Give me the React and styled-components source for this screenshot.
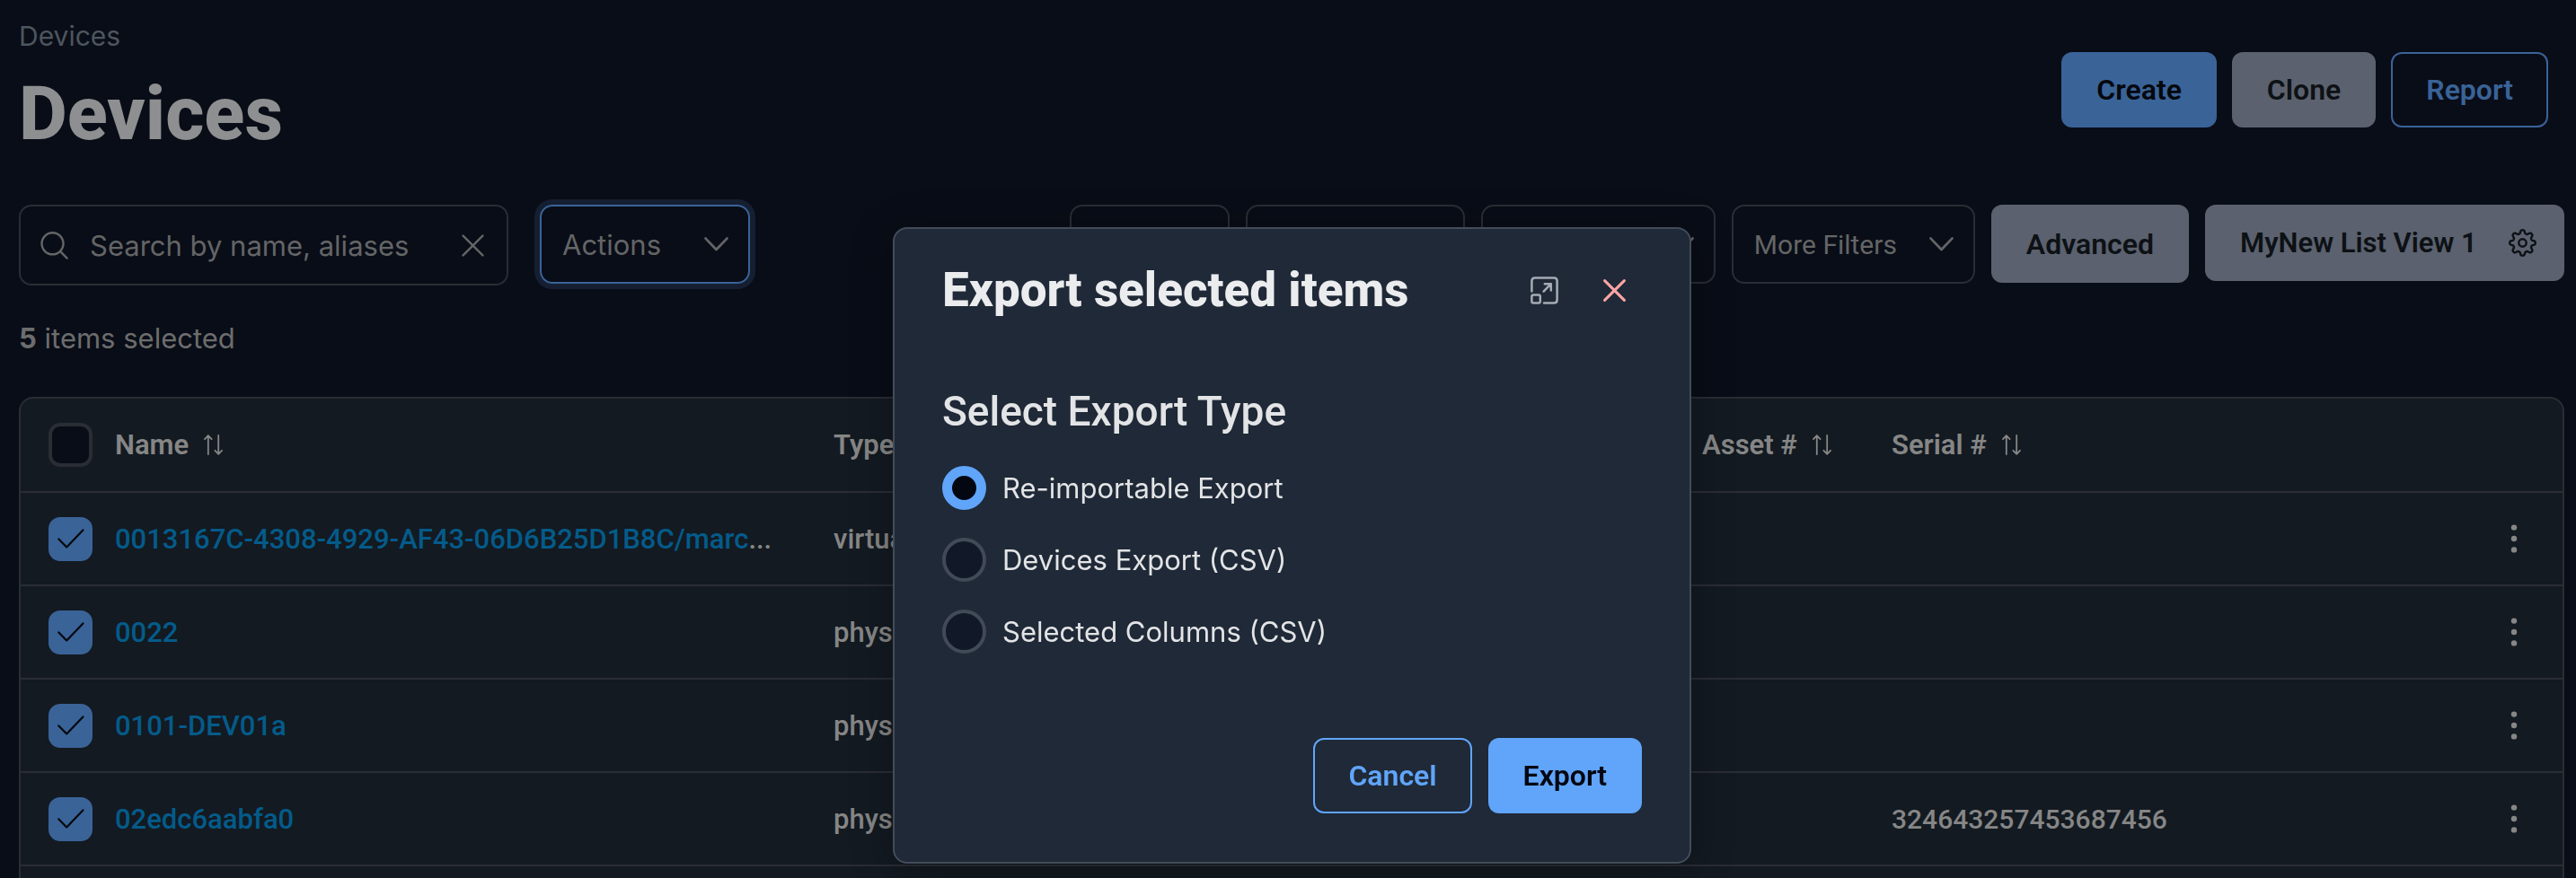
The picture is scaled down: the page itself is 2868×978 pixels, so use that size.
import React from "react";
import styled, { createGlobalStyle, css } from "styled-components";

const c = {
  page: "#090d17",
  panel: "#131a21",
  line: "#2a2d34",
  blue: "#3a6398",
  gray: "#5b616e",
  ink: "#0d1115",
  muted: "#646566",
  cell: "#868686",
  link: "#045b8a",
  modal: "#1f2937",
  modalLine: "#434c59",
  bright: "#60a5fa",
  light: "#e3e4e6",
};

const GlobalStyle = createGlobalStyle`
  *, *::before, *::after { box-sizing: border-box; }
  body { margin: 0; background: ${c.page}; font-family: Inter, sans-serif; color: ${c.cell}; }
  button, input, select { font-family: inherit; }
  svg { display: block; flex: none; }
`;

const Page = styled.div`
  height: 100vh;
  overflow: hidden;
  padding: 22px 13px 0 21px;
`;

const Header = styled.header`
  display: flex;
  justify-content: space-between;
  align-items: flex-start;
`;

const Breadcrumb = styled.a`
  display: block;
  font-size: 30px;
  line-height: 36px;
  color: #4d555e;
  text-decoration: none;
`;

const PageTitle = styled.h1`
  margin: 24px 0 0;
  font: 800 83px/90px Roboto, sans-serif;
  color: #8e8f90;
`;

const HeaderActions = styled.div`
  display: flex;
  gap: 17px;
  padding: 36px 18px 0 0;
`;

const tones = {
  primary: css`background: ${c.blue}; color: #05080d;`,
  secondary: css`background: ${c.gray}; color: ${c.ink};`,
  outline: css`background: transparent; color: ${c.blue}; border-color: ${c.blue};`,
  brightPrimary: css`background: ${c.bright}; color: #030712;`,
  brightOutline: css`background: transparent; color: ${c.bright}; border-color: ${c.bright};`,
};

const Button = styled.button`
  height: 84px;
  padding: 0 37px;
  border: 2px solid transparent;
  border-radius: 12px;
  font: 600 32px/40px Roboto, sans-serif;
  white-space: nowrap;
  ${(p) => tones[p.$tone]}
`;

const FilterButton = styled(Button)`
  height: 87px;
`;

const ViewButton = styled(Button)`
  display: flex;
  align-items: center;
  justify-content: space-between;
  width: 400px;
  height: 85px;
  padding-right: 29px;
  font-size: 31px;
`;

const Toolbar = styled.div`
  display: flex;
  align-items: flex-start;
  gap: 35px;
  margin-top: 56px;
`;

const SearchBox = styled.div`
  display: flex;
  align-items: center;
  width: 545px;
  height: 90px;
  padding: 0 25px 0 22px;
  border: 2px solid ${c.line};
  border-radius: 14px;
  color: ${c.muted};
`;

const SearchInput = styled.input`
  flex: 1;
  min-width: 0;
  margin-left: 24px;
  padding: 0;
  border: 0;
  outline: 0;
  background: transparent;
  font-size: 31px;
  color: ${c.muted};
  &::placeholder { color: ${c.muted}; opacity: 1; }
`;

const IconButton = styled.button`
  display: flex;
  padding: 0;
  border: 0;
  background: transparent;
  color: ${(p) => p.$color || "inherit"};
`;

const Filters = styled.div`
  display: flex;
  align-items: flex-start;
  gap: 18px;
  margin-left: auto;
`;

const SelectBox = styled.div`
  display: grid;
  align-items: center;
  width: ${(p) => p.$width}px;
  height: 88px;
  color: ${c.muted};
  & > * { grid-area: 1 / 1; }
  & > svg { justify-self: end; margin-right: 24px; pointer-events: none; }
`;

const Select = styled.select`
  appearance: none;
  width: 100%;
  height: 100%;
  padding: 0 62px 0 23px;
  border: 2px solid ${c.line};
  border-radius: 14px;
  outline: 0;
  background: transparent;
  font-family: ${(p) => (p.$compact ? "Roboto" : "Inter")}, sans-serif;
  font-size: ${(p) => (p.$compact ? 30 : 31)}px;
  color: ${c.muted};
  ${(p) => p.$focused && css`
    border-color: ${c.blue};
    box-shadow: 0 0 0 6px #151f31;
  `}
`;

const SelectionCount = styled.p`
  margin: 39px 0 45px;
  font-size: 31px;
  line-height: 40px;
  color: #6c6d6d;
`;

const TableFrame = styled.div`
  border: 2px solid ${c.line};
  border-radius: 16px;
  background: ${c.panel};
`;

const Table = styled.table`
  width: 100%;
  table-layout: fixed;
  border-collapse: separate;
  border-spacing: 0;
  font-family: Roboto, sans-serif;
  font-size: 31px;
`;

const Col = styled.col`
  width: ${(p) => (p.$width ? `${p.$width}px` : "auto")};
`;

const Th = styled.th`
  height: 105px;
  padding: 0;
  border-bottom: 2px solid ${c.line};
  text-align: left;
  font-weight: 600;
  white-space: nowrap;
`;

const Td = styled.td`
  height: 104px;
  padding: 0;
  border-bottom: 2px solid ${c.line};
  font-weight: 500;
  white-space: nowrap;
`;

const SerialCell = styled(Td)`
  font-size: 30px;
`;

const ThInner = styled.span`
  display: flex;
  align-items: center;
  gap: 17px;
`;

const DeviceLink = styled.a`
  color: ${c.link};
  text-decoration: none;
`;

const CheckWrap = styled.span`
  display: grid;
  width: 49px;
  margin-left: 31px;
  & > * { grid-area: 1 / 1; }
  & > svg { place-self: center; pointer-events: none; color: #05080d; }
`;

const CheckInput = styled.input`
  appearance: none;
  width: 49px;
  height: 49px;
  margin: 0;
  border: 4px solid ${c.line};
  border-radius: 13px;
  background: ${c.page};
  &:checked { border-color: ${c.blue}; background: ${c.blue}; }
`;

const MenuButton = styled(IconButton)`
  margin: 0 auto;
`;

const Backdrop = styled.div`
  position: fixed;
  inset: 0;
  display: flex;
  justify-content: center;
  align-items: flex-start;
  padding: 253px 0 0 9px;
`;

const Modal = styled.section`
  width: 889px;
  padding: 38px 53px 54px;
  border: 2px solid ${c.modalLine};
  border-radius: 16px;
  background: ${c.modal};
  color: ${c.light};
  box-shadow: 0 8px 48px rgba(0, 0, 0, 0.3);
`;

const ModalHeader = styled.header`
  display: flex;
  align-items: center;
  gap: 50px;
  padding-right: 18px;
`;

const ModalTitle = styled.h2`
  flex: 1;
  margin: 0;
  font: 800 53px/60px Roboto, sans-serif;
  color: #ebecee;
`;

const ExportOptions = styled.fieldset`
  display: grid;
  gap: 31px;
  margin: 75px 0 0;
  padding: 0;
  border: 0;
`;

const Legend = styled.legend`
  padding: 0 0 31px;
  font: 500 46px/60px Roboto, sans-serif;
`;

const RadioLabel = styled.label`
  display: flex;
  align-items: center;
  gap: 18px;
  font-size: 31px;
`;

const RadioInput = styled.input`
  appearance: none;
  width: 49px;
  height: 49px;
  margin: 0;
  border: 4px solid #414a57;
  border-radius: 50%;
  background: #111827;
  &:checked { border: 11px solid ${c.bright}; background: #030712; }
`;

const ModalFooter = styled.footer`
  display: flex;
  justify-content: flex-end;
  gap: 18px;
  margin-top: 94px;
`;

const strokeProps = { fill: "none", stroke: "currentColor", strokeLinecap: "round", strokeLinejoin: "round" };

const SearchIcon = () => (
  <svg width="31" height="31" viewBox="0 0 31 31" {...strokeProps} strokeWidth="2.4">
    <circle cx="13.5" cy="13.3" r="12" />
    <path d="M22 21.8L29.6 29.6" />
  </svg>
);

const CloseIcon = ({ weight = 2.4 }) => (
  <svg width="25" height="25" viewBox="0 0 25 25" {...strokeProps} strokeWidth={weight}>
    <path d="M1.6 1.6L23.4 23.4M23.4 1.6L1.6 23.4" />
  </svg>
);

const ChevronIcon = () => (
  <svg width="27" height="16" viewBox="0 0 27 16" {...strokeProps} strokeWidth="2.8">
    <path d="M1.6 1.6L13.5 14L25.4 1.6" />
  </svg>
);

const ExpandIcon = () => (
  <svg width="31" height="31" viewBox="0 0 31 31" {...strokeProps} strokeWidth="2.5">
    <path d="M1.4 16.4V5Q1.4 1.4 5 1.4H26Q29.6 1.4 29.6 5V26Q29.6 29.6 26 29.6H15" />
    <rect x="1.4" y="20.4" width="9.4" height="9.2" rx="1.8" />
    <path d="M14.6 16.6L22.8 8.2M15.8 8.2H22.8V15.4" />
  </svg>
);

const SortIcon = () => (
  <svg width="21" height="23" viewBox="0 0 21 23" {...strokeProps} strokeWidth="1.8">
    <path d="M4.8 22V1.2M1 5.2L4.8 1.2L8.6 5.2M16.2 1V21.8M12.4 17.8L16.2 21.8L20 17.8" />
  </svg>
);

const CheckIcon = () => (
  <svg width="30" height="22" viewBox="0 0 30 22" {...strokeProps} strokeWidth="2.2">
    <path d="M1.4 11.4L10.2 20.4L28.4 1.4" />
  </svg>
);

const DotsIcon = () => (
  <svg width="8" height="32" viewBox="0 0 8 32" fill="currentColor">
    <circle cx="4" cy="3.6" r="3.2" />
    <circle cx="4" cy="16" r="3.2" />
    <circle cx="4" cy="28.4" r="3.2" />
  </svg>
);

// Eight rounded teeth traced as a softened square wave around the centre.
const gearPath =
  Array.from({ length: 160 }, (_, i) => {
    const a = (i / 160) * Math.PI * 2;
    const r = 12.4 + 1.9 * Math.tanh(1.8 * Math.cos(8 * a));
    return `${i ? "L" : "M"}${(15.5 + r * Math.sin(a)).toFixed(2)} ${(15.5 - r * Math.cos(a)).toFixed(2)}`;
  }).join("") + "Z";

const GearIcon = () => (
  <svg width="31" height="31" viewBox="0 0 31 31" {...strokeProps} strokeWidth="2.4">
    <path d={gearPath} />
    <circle cx="15.5" cy="15.5" r="4.2" />
  </svg>
);

const Dropdown = ({ label, width, ...rest }) => (
  <SelectBox $width={width}>
    <Select aria-label={label} {...rest}>
      <option>{label}</option>
    </Select>
    <ChevronIcon />
  </SelectBox>
);

const Checkbox = ({ label, checked }) => (
  <CheckWrap>
    <CheckInput type="checkbox" aria-label={label} defaultChecked={checked} />
    {checked && <CheckIcon />}
  </CheckWrap>
);

const HeadCell = ({ children }) => (
  <Th scope="col">
    <ThInner>
      {children}
      <SortIcon />
    </ThInner>
  </Th>
);

const devices = [
  { name: "0013167C-4308-4929-AF43-06D6B25D1B8C/marc", cut: true, type: "virtual" },
  { name: "0022", type: "physical" },
  { name: "0101-DEV01a", type: "physical" },
  { name: "02edc6aabfa0", type: "physical", serial: "324643257453687456" },
];

const exportTypes = ["Re-importable Export", "Devices Export (CSV)", "Selected Columns (CSV)"];

export default function App() {
  return (
    <>
      <GlobalStyle />
      <Page>
        <Header>
          <div>
            <Breadcrumb href="#devices">Devices</Breadcrumb>
            <PageTitle>Devices</PageTitle>
          </div>
          <HeaderActions>
            <Button $tone="primary">Create</Button>
            <Button $tone="secondary">Clone</Button>
            <Button $tone="outline">Report</Button>
          </HeaderActions>
        </Header>

        <Toolbar>
          <SearchBox>
            <SearchIcon />
            <SearchInput type="text" aria-label="Search" placeholder="Search by name, aliases" />
            <IconButton aria-label="Clear search">
              <CloseIcon />
            </IconButton>
          </SearchBox>
          <Dropdown label="Actions" width={234} $focused />
          <Filters>
            <Dropdown label="Type" width={178} $compact />
            <Dropdown label="Category" width={244} $compact />
            <Dropdown label="Customer" width={261} $compact />
            <Dropdown label="More Filters" width={271} $compact />
            <FilterButton $tone="secondary">Advanced</FilterButton>
            <ViewButton $tone="secondary">
              MyNew List View 1
              <GearIcon />
            </ViewButton>
          </Filters>
        </Toolbar>

        <SelectionCount>
          <b>5</b> items selected
        </SelectionCount>

        <TableFrame>
          <Table>
            <colgroup>
              <Col $width={105} />
              <Col $width={800} />
              <Col $width={967} />
              <Col $width={211} />
              <Col />
              <Col $width={108} />
            </colgroup>
            <thead>
              <tr>
                <Th>
                  <Checkbox label="Select all" />
                </Th>
                <HeadCell>Name</HeadCell>
                <HeadCell>Type</HeadCell>
                <HeadCell>Asset #</HeadCell>
                <HeadCell>Serial #</HeadCell>
                <Th />
              </tr>
            </thead>
            <tbody>
              {devices.map((d) => (
                <tr key={d.name}>
                  <Td>
                    <Checkbox label={`Select ${d.name}`} checked />
                  </Td>
                  <Td>
                    <DeviceLink href="#device">{d.name}</DeviceLink>
                    {d.cut && "..."}
                  </Td>
                  <Td>{d.type}</Td>
                  <Td />
                  <SerialCell>{d.serial}</SerialCell>
                  <Td>
                    <MenuButton aria-label="Row menu">
                      <DotsIcon />
                    </MenuButton>
                  </Td>
                </tr>
              ))}
              <tr>
                <Td colSpan={6} />
              </tr>
            </tbody>
          </Table>
        </TableFrame>
      </Page>

      <Backdrop>
        <Modal role="dialog" aria-modal="true" aria-labelledby="export-title">
          <ModalHeader>
            <ModalTitle id="export-title">Export selected items</ModalTitle>
            <IconButton aria-label="Expand" $color="#a5abb4">
              <ExpandIcon />
            </IconButton>
            <IconButton aria-label="Close" $color="#fca5a5">
              <CloseIcon weight={3} />
            </IconButton>
          </ModalHeader>
          <ExportOptions>
            <Legend>Select Export Type</Legend>
            {exportTypes.map((t, i) => (
              <RadioLabel key={t}>
                <RadioInput type="radio" name="export-type" defaultChecked={i === 0} />
                {t}
              </RadioLabel>
            ))}
          </ExportOptions>
          <ModalFooter>
            <Button $tone="brightOutline">Cancel</Button>
            <Button $tone="brightPrimary">Export</Button>
          </ModalFooter>
        </Modal>
      </Backdrop>
    </>
  );
}
